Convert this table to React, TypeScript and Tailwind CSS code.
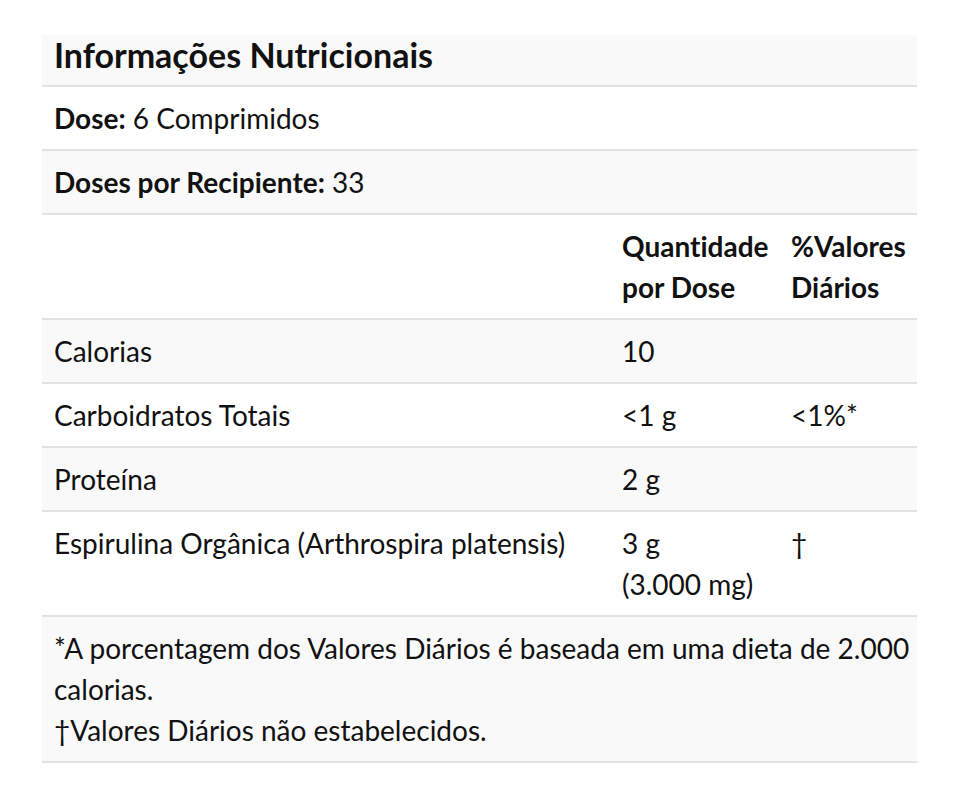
import React from "react";

const rows = [
  { name: "Calorias", qty: ["10"], dv: "" },
  { name: "Carboidratos Totais", qty: ["<1 g"], dv: "<1%*" },
  { name: "Proteína", qty: ["2 g"], dv: "" },
  { name: "Espirulina Orgânica (Arthrospira platensis)", qty: ["3 g", "(3.000 mg)"], dv: "†" },
];

const App = () => {
  return (
    <div className="min-h-[800px] w-full bg-white pt-[35px] font-['Lato','Liberation_Sans',sans-serif] text-[#111] [font-variant-ligatures:none]">
      <div className="ml-[42px] w-[875px]">
        <div className="bg-[#f9f9f9] px-[12px] pb-[10px] text-[34px] font-bold leading-[40px] border-b-2 border-[#e2e2e2]">
          Informações Nutricionais
        </div>
        <div className="bg-white px-[12px] py-[10.5px] text-[28px] leading-[41px] border-b-2 border-[#e2e2e2]">
          <span className="font-bold">Dose:</span> 6 Comprimidos
        </div>
        <div className="bg-[#f9f9f9] px-[12px] py-[10.5px] text-[28px] leading-[41px] border-b-2 border-[#e2e2e2]">
          <span className="font-bold">Doses por Recipiente:</span> 33
        </div>
        <div className="grid grid-cols-[568px_169px_138px] bg-white py-[10.5px] text-[28px] font-bold leading-[41px] border-b-2 border-[#e2e2e2]">
          <div />
          <div className="px-[12px]">
            Quantidade
            <br />
            por Dose
          </div>
          <div className="px-[12px]">
            %Valores
            <br />
            Diários
          </div>
        </div>
        {rows.map((r, i) => (
          <div
            key={r.name}
            className={`grid grid-cols-[568px_169px_138px] py-[10.5px] text-[28px] leading-[41px] border-b-2 border-[#e2e2e2] ${
              i % 2 === 0 ? "bg-[#f9f9f9]" : "bg-white"
            }`}
          >
            <div className="px-[12px]">{r.name}</div>
            <div className="px-[12px]">
              {r.qty.map((q) => (
                <div key={q}>{q}</div>
              ))}
            </div>
            <div className="px-[12px]">{r.dv}</div>
          </div>
        ))}
        <div className="bg-[#f9f9f9] pl-[12px] pr-[2px] py-[10.5px] text-[28px] leading-[41px] border-b-2 border-[#e2e2e2]">
          *A porcentagem dos Valores Diários é baseada em uma dieta de 2.000 calorias.
          <br />
          †Valores Diários não estabelecidos.
        </div>
      </div>
    </div>
  );
};

export default App;
